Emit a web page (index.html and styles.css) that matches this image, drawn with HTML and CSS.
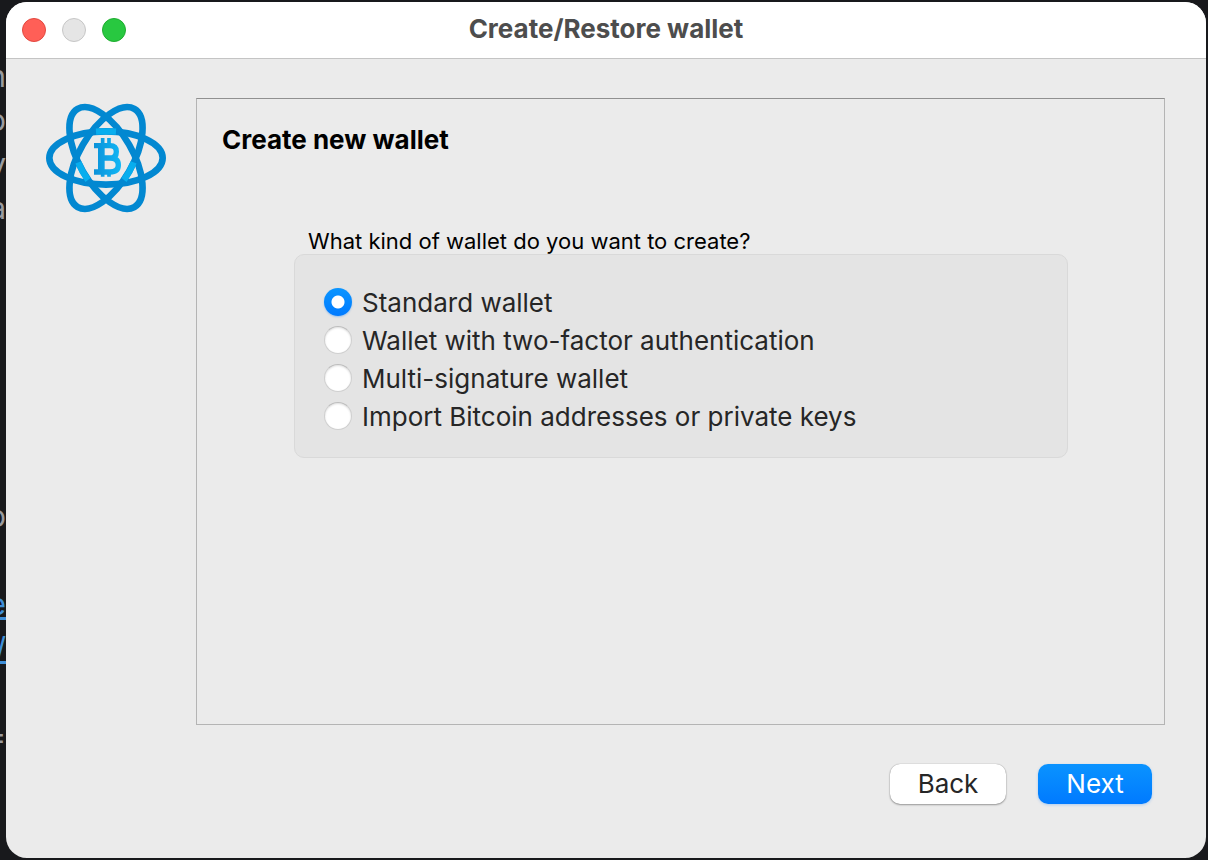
FILE: index.html
```html
<!DOCTYPE html>
<html lang="en">
<head>
<meta charset="utf-8">
<title>Create/Restore wallet</title>
<link rel="stylesheet" href="styles.css">
</head>
<body>
<div class="backdrop" aria-hidden="true">
  <span>n</span><span>o</span><span>y</span><span>a</span>
  <span></span><span></span><span></span><span></span><span></span><span></span>
  <span>o</span><span></span>
  <span class="link">e</span><span class="link">/</span>
  <span></span><span>=</span>
</div>
<main class="window">
  <header class="titlebar">
    <div class="lights">
      <button type="button" class="light close" aria-label="Close"></button>
      <button type="button" class="light minimize" aria-label="Minimize" disabled></button>
      <button type="button" class="light maximize" aria-label="Maximize"></button>
    </div>
    <h1 class="title">Create/Restore wallet</h1>
  </header>
  <form class="wizard">
    <div class="content">
      <svg class="logo" viewBox="0 0 360 360" role="img" aria-label="Electrum">
        <defs>
          <linearGradient id="coin" gradientUnits="userSpaceOnUse" x1="140" y1="0" x2="228" y2="0">
            <stop offset="0" stop-color="#0a90d8"/>
            <stop offset="1" stop-color="#12b8f6"/>
          </linearGradient>
        </defs>
        <g fill="none" stroke="#0288d1" stroke-width="20">
          <ellipse cx="180" cy="180" rx="170" ry="80"/>
          <ellipse cx="180" cy="180" rx="170" ry="80" transform="rotate(60 180 180)"/>
          <ellipse cx="180" cy="180" rx="170" ry="80" transform="rotate(-60 180 180)"/>
        </g>
        <g fill="none" stroke="#08aeee" stroke-width="19">
          <path d="M150 101Q180 99 210 101"/>
          <path d="M97 193Q108 222 126 246"/>
          <path d="M263 193Q252 222 234 246"/>
        </g>
        <g fill="none" stroke="url(#coin)">
          <path d="M144 143H192Q211 143 211 161Q211 180 192 180H162M192 180Q217 180 217 201Q217 222 192 222H144" stroke-width="16"/>
          <path d="M166 139V226" stroke-width="20"/>
          <path d="M170 120V142M189 120V142M170 222V236M189 222V236" stroke-width="11"/>
        </g>
      </svg>
      <section class="page">
        <h2 class="heading">Create new wallet</h2>
        <fieldset class="choices">
          <legend class="question">What kind of wallet do you want to create?</legend>
          <div class="options">
            <label class="option"><input type="radio" name="kind" checked>Standard wallet</label>
            <label class="option"><input type="radio" name="kind">Wallet with two-factor authentication</label>
            <label class="option"><input type="radio" name="kind">Multi-signature wallet</label>
            <label class="option"><input type="radio" name="kind">Import Bitcoin addresses or private keys</label>
          </div>
        </fieldset>
      </section>
    </div>
    <footer class="actions">
      <button type="button" class="button">Back</button>
      <button type="button" class="button primary">Next</button>
    </footer>
  </form>
</main>
</body>
</html>
```
FILE: styles.css
```css
* { box-sizing: border-box; }
body {
  margin: 0;
  min-height: 100vh;
  padding: 2px 2px 2px 6px;
  display: flex;
  position: relative;
  background: #18191c;
  color: #262626;
  font-family: Inter, "Liberation Sans", sans-serif;
}
.backdrop {
  position: absolute;
  top: 54px;
  left: 0;
  width: 6px;
  overflow: hidden;
  display: flex;
  flex-direction: column;
  align-items: flex-end;
  color: #9a9b9f;
  font-size: 30px;
  line-height: 44px;
}
.backdrop span { height: 44px; }
.backdrop .link { color: #3f8fd8; text-decoration: underline; }
.window {
  flex: 1;
  display: flex;
  flex-direction: column;
  position: relative;
  overflow: hidden;
  border-radius: 21px;
  background: #ebebeb;
}
.titlebar {
  display: grid;
  grid-template-columns: 1fr auto 1fr;
  align-items: center;
  height: 57px;
  padding: 0 16px;
  background: #fff;
  border-bottom: 1px solid #c4c4c4;
}
.lights { display: flex; gap: 16px; }
.light {
  width: 24px;
  height: 24px;
  padding: 0;
  border: 1px solid;
  border-radius: 50%;
}
.close { background: #ff5f57; border-color: #e2483f; }
.minimize { background: #e5e5e5; border-color: #c6c6c6; }
.maximize { background: #28c840; border-color: #1fac2f; }
.title {
  margin: 0;
  padding-bottom: 2px;
  color: #4d4d4d;
  font-size: 26px;
  font-weight: 700;
  line-height: 32px;
}
.wizard {
  flex: 1;
  display: flex;
  flex-direction: column;
  padding: 39px 41px 54px 40px;
}
.content {
  flex: 1;
  display: flex;
  align-items: flex-start;
  gap: 30px;
}
.logo { flex: none; width: 120px; height: 120px; }
.page {
  flex: 1;
  align-self: stretch;
  padding: 25px;
  border: 1px solid #b4b4b4;
  border-top-color: #909090;
}
.heading {
  margin: 0;
  color: #000;
  font-size: 26px;
  font-weight: 700;
  line-height: 32px;
}
.choices {
  margin: 72px 71px 0 72px;
  padding: 0;
  border: 0;
}
.question {
  padding: 0 14px;
  color: #000;
  font-size: 22px;
  line-height: 26px;
}
.options {
  padding: 28px 29px 22px;
  border: 1px solid #d9d9d9;
  border-radius: 10px;
  background: #e4e4e4;
}
.option {
  display: flex;
  align-items: center;
  gap: 10px;
  height: 38px;
  font-size: 26px;
}
.option input {
  appearance: none;
  flex: none;
  width: 28px;
  height: 28px;
  margin: 0;
  border: 1px solid #cfcfcf;
  border-top-color: #bdbdbd;
  border-radius: 50%;
  background: #fff;
  box-shadow: inset 0 1px 2px #0002;
}
.option input:checked {
  border: 0;
  background: radial-gradient(circle, #fff 6px, transparent 7px), linear-gradient(#0a95ff, #007aff);
  box-shadow: 0 1px 2px #007aff55;
}
.actions {
  display: flex;
  justify-content: flex-end;
  gap: 32px;
  padding: 39px 13px 0;
}
.button {
  min-width: 116px;
  height: 40px;
  padding: 0 24px;
  border: 0;
  border-radius: 10px;
  background: #fff;
  color: #262626;
  font: 26px/38px Inter, "Liberation Sans", sans-serif;
  box-shadow: 0 0 1px #0006, 0 1px 2px #0005;
}
.primary {
  min-width: 114px;
  background: linear-gradient(#0a93ff, #007aff);
  color: #fff;
  box-shadow: 0 1px 3px #007aff44;
}
```
